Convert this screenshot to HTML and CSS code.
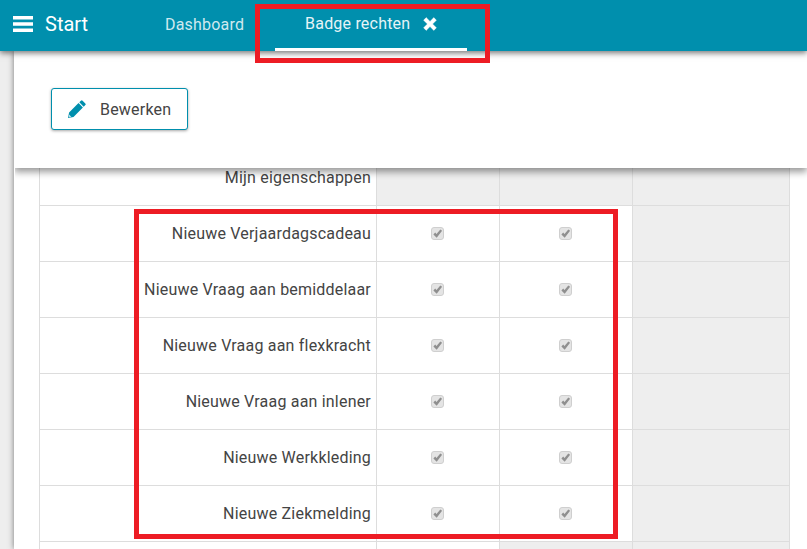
FILE: index.html
```html
<!DOCTYPE html>
<html lang="nl">
<head>
<meta charset="utf-8">
<title>Badge rechten</title>
<link rel="stylesheet" href="styles.css">
</head>
<body>
<svg class="defs" width="0" height="0" aria-hidden="true">
  <symbol id="tick" viewBox="0 0 13 13">
    <path d="M2.4 7.4 4.2 5.6 5.5 7 9.3 2.4 11.1 3.8 5.7 10.8Z" fill="#8f8f8f"/>
  </symbol>
</svg>
<header class="topbar">
  <div class="brand">
    <svg class="bars" viewBox="0 0 20 16" aria-hidden="true"><path d="M0 0h20v3.4H0zM0 6.3h20v3.4H0zM0 12.6h20V16H0z" fill="#fff"/></svg>
    <span class="brand-name">Start</span>
  </div>
  <nav class="tabs">
    <a class="tab">Dashboard</a>
    <a class="tab tab-active">Badge rechten
      <svg class="close" viewBox="0 0 14 14" aria-hidden="true"><path d="M3.2.6 7 4.4 10.8.6 13.4 3.2 9.6 7l3.8 3.8-2.6 2.6L7 9.6l-3.8 3.8L.6 10.8 4.4 7 .6 3.2Z" fill="#fff" stroke="#fff" stroke-width=".4" stroke-linejoin="round"/></svg>
    </a>
  </nav>
</header>
<div class="page">
  <aside class="rail"></aside>
  <main class="content">
    <div class="toolbar">
      <button class="btn" type="button">
        <svg class="pencil" viewBox="0 0 18 18" aria-hidden="true"><path d="M12.9.7a1.2 1.2 0 0 1 1.7 0l2.7 2.7a1.2 1.2 0 0 1 0 1.7l-1.6 1.6-4.4-4.4ZM10.5 3.1l4.4 4.4-9.4 9.4L0 18l1.1-5.5Z" fill="#008fad"/><path d="M1.1 14.6 3.4 16.9 1.6 17.2 .8 16.4Z" fill="#fff" opacity=".75"/></svg>
        <span class="btn-label">Bewerken</span>
      </button>
    </div>
    <table class="rights">
      <colgroup><col class="c-name"><col class="c-a"><col class="c-b"><col class="c-rest"></colgroup>
      <tbody>
        <tr><th>Mijn eigenschappen</th><td class="off"></td><td class="off"></td><td class="off"></td></tr>
        <tr><th>Nieuwe Verjaardagscadeau</th><td><span class="cb"><svg><use href="#tick"/></svg></span></td><td><span class="cb"><svg><use href="#tick"/></svg></span></td><td class="off"></td></tr>
        <tr><th>Nieuwe Vraag aan bemiddelaar</th><td><span class="cb"><svg><use href="#tick"/></svg></span></td><td><span class="cb"><svg><use href="#tick"/></svg></span></td><td class="off"></td></tr>
        <tr><th>Nieuwe Vraag aan flexkracht</th><td><span class="cb"><svg><use href="#tick"/></svg></span></td><td><span class="cb"><svg><use href="#tick"/></svg></span></td><td class="off"></td></tr>
        <tr><th>Nieuwe Vraag aan inlener</th><td><span class="cb"><svg><use href="#tick"/></svg></span></td><td><span class="cb"><svg><use href="#tick"/></svg></span></td><td class="off"></td></tr>
        <tr><th>Nieuwe Werkkleding</th><td><span class="cb"><svg><use href="#tick"/></svg></span></td><td><span class="cb"><svg><use href="#tick"/></svg></span></td><td class="off"></td></tr>
        <tr><th>Nieuwe Ziekmelding</th><td><span class="cb"><svg><use href="#tick"/></svg></span></td><td><span class="cb"><svg><use href="#tick"/></svg></span></td><td class="off"></td></tr>
        <tr><th></th><td></td><td class="off"></td><td class="off"></td></tr>
      </tbody>
    </table>
  </main>
</div>
<div class="mark mark-tab"></div>
<div class="mark mark-rows"></div>
</body>
</html>
```
FILE: styles.css
```css
* { box-sizing: border-box; }
html, body { margin: 0; height: 100%; }
body {
  position: relative;
  height: 549px;
  overflow: hidden;
  background: #eee;
  font-family: Roboto, "Liberation Sans", sans-serif;
  color: #444;
}
.defs { position: absolute; }
.topbar {
  position: relative;
  z-index: 3;
  display: flex;
  height: 51px;
  background: #008fad;
  color: #fff;
  box-shadow: 0 2px 6px rgba(0, 0, 0, .55);
}
.brand { display: flex; align-items: center; width: 165px; padding: 0 0 3px 13px; }
.bars { width: 20px; height: 16px; margin-right: 12px; }
.brand-name { font-size: 20px; }
.tabs { display: flex; }
.tab {
  display: flex;
  align-items: center;
  padding-bottom: 3px;
  font-size: 16px;
  letter-spacing: .2px;
  color: #cfe9ef;
}
.tab-active {
  width: 192px;
  margin-left: 31px;
  justify-content: center;
  border-bottom: 3px solid #fff;
  color: #e6f4f7;
  padding-top: 2px;
  padding-bottom: 3px;
}
.close { width: 14px; height: 14px; margin-left: 13px; }
.page { display: flex; height: 498px; }
.rail { width: 14px; flex: none; }
.content {
  position: relative;
  flex: 1;
  background: #fff;
  padding: 98px 0 0 25px;
  box-shadow: 0 0 6px rgba(0, 0, 0, .5);
  clip-path: inset(0 0 0 -8px);
}
.toolbar {
  position: absolute;
  z-index: 2;
  top: 0;
  left: 0;
  right: 0;
  height: 117px;
  padding: 37px 0 0 37px;
  background: #fff;
  box-shadow: 0 4px 7px rgba(0, 0, 0, .4);
  clip-path: inset(0 0 -12px 1px);
}
.btn {
  display: flex;
  align-items: center;
  width: 137px;
  height: 42px;
  padding: 0 0 0 16px;
  background: #fff;
  border: 1px solid #008fad;
  border-radius: 3px;
  box-shadow: 0 1px 3px rgba(0, 0, 0, .35);
  font: 16px Roboto, "Liberation Sans", sans-serif;
  letter-spacing: .2px;
  color: #444;
}
.pencil { width: 18px; height: 18px; margin-right: 14px; }
.rights {
  table-layout: fixed;
  width: 750px;
  border-collapse: collapse;
  font-size: 16px;
  letter-spacing: .2px;
}
.c-name { width: 337px; }
.c-a { width: 123px; }
.c-b { width: 133px; }
.c-rest { width: 157px; }
.rights tr { height: 56px; }
.rights th, .rights td { border: 1px solid #ddd; padding: 0; }
.rights th { font-weight: 400; text-align: right; padding-right: 5px; }
.rights td { text-align: center; }
.rights .off { background: #eee; }
.cb {
  display: inline-block;
  width: 13px;
  height: 13px;
  vertical-align: middle;
  background: #e4e4e4;
  border: 1px solid #cfcfcf;
  border-radius: 3px;
  position: relative;
  top: -1px;
  left: -1px;
}
.cb svg { display: block; width: 13px; height: 13px; margin: -1px; }
.mark {
  position: absolute;
  z-index: 5;
  border: 5px solid #ed1c24;
  pointer-events: none;
}
.mark-tab { left: 255px; top: 4px; width: 235px; height: 59px; }
.mark-rows { left: 134px; top: 209px; width: 484px; height: 330px; }
```
